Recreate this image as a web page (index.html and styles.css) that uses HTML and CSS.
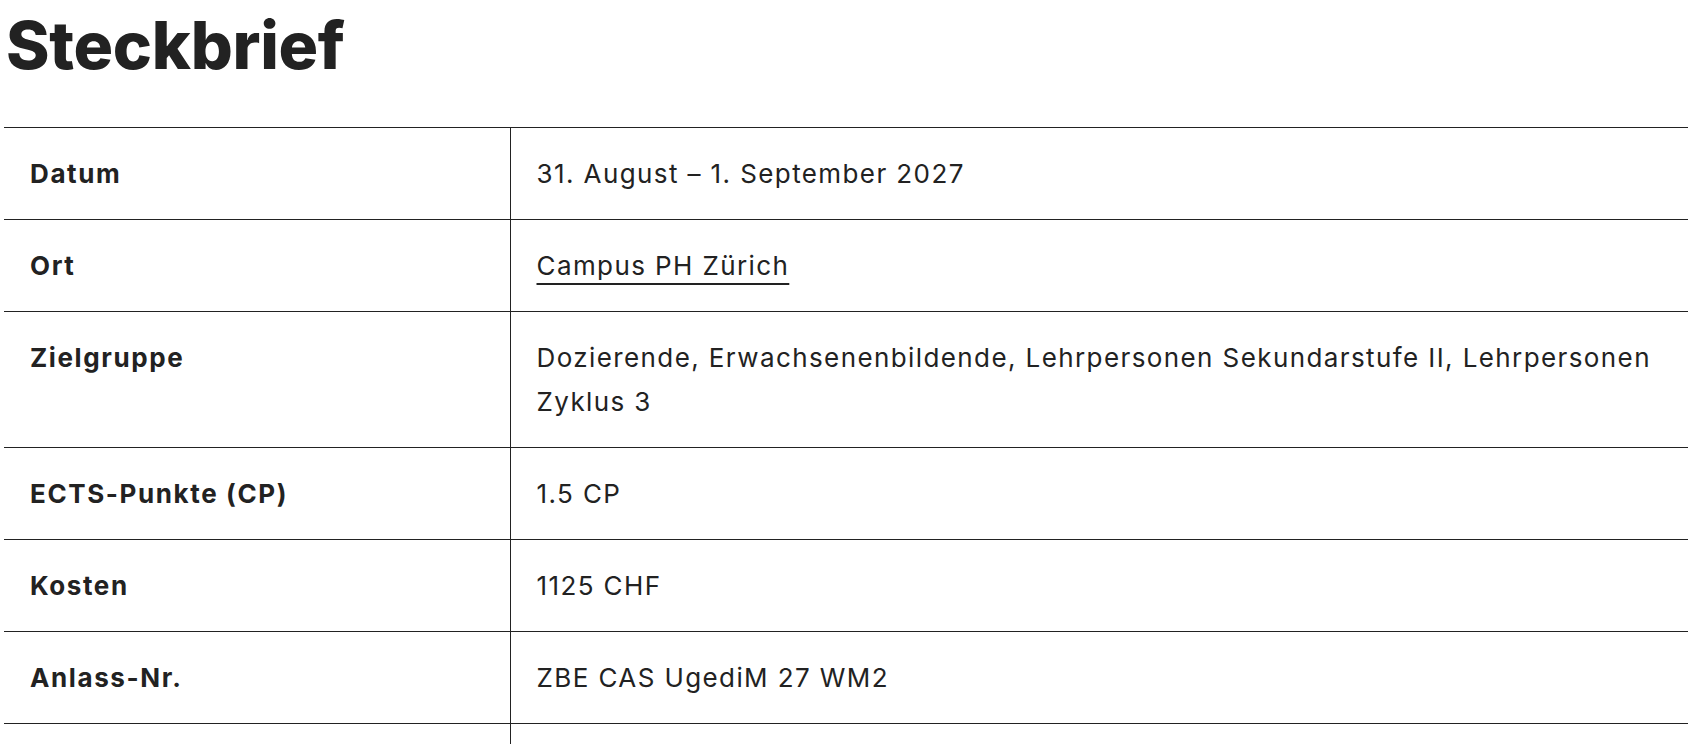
FILE: index.html
```html
<!DOCTYPE html>
<html lang="de">
<head>
<meta charset="utf-8">
<title>Steckbrief</title>
<link rel="stylesheet" href="styles.css">
</head>
<body>
<main class="page">
  <h1 class="title">Steckbrief</h1>
  <table class="facts">
    <colgroup><col class="col-label"><col class="col-value"></colgroup>
    <tbody>
      <tr><th class="label">Datum</th><td class="value">31. August – 1. September 2027</td></tr>
      <tr><th class="label">Ort</th><td class="value"><a class="link" href="#">Campus PH Zürich</a></td></tr>
      <tr><th class="label">Zielgruppe</th><td class="value">Dozierende, Erwachsenenbildende, Lehrpersonen Sekundarstufe II, Lehrpersonen Zyklus 3</td></tr>
      <tr><th class="label">ECTS-Punkte (CP)</th><td class="value">1.5 CP</td></tr>
      <tr><th class="label">Kosten</th><td class="value">1125 CHF</td></tr>
      <tr><th class="label">Anlass-Nr.</th><td class="value">ZBE CAS UgediM 27 WM2</td></tr>
      <tr class="row-next" aria-hidden="true"><th class="label"></th><td class="value"></td></tr>
    </tbody>
  </table>
</main>
</body>
</html>
```
FILE: styles.css
```css
html, body {
  margin: 0;
  padding: 0;
  background: #ffffff;
}
body {
  font-family: "Inter", "Noto Sans", sans-serif;
  color: #222222;
  overflow: hidden;
}
.page {
  padding: 5px 0 0 4px;
}
.title {
  margin: 0 0 42px 0;
  padding-left: 2px;
  font-size: 66px;
  line-height: 80px;
  font-weight: 800;
  letter-spacing: -0.3px;
  color: #222222;
}
.facts {
  width: 100%;
  border-collapse: collapse;
  table-layout: fixed;
}
.col-label {
  width: 506px;
}
.facts tr {
  border-top: 1px solid #222222;
}
.facts th,
.facts td {
  padding: 24px 25px 23px 26px;
  font-size: 26px;
  line-height: 44px;
  vertical-align: top;
  text-align: left;
}
.row-next th,
.row-next td {
  height: 44px;
}
.label {
  font-weight: 700;
  letter-spacing: 1.6px;
  border-right: 1px solid #222222;
}
.value {
  font-weight: 400;
  letter-spacing: 1.4px;
}
.link {
  color: #222222;
  text-decoration: underline;
  text-decoration-thickness: 2px;
  text-underline-offset: 8px;
}
```
